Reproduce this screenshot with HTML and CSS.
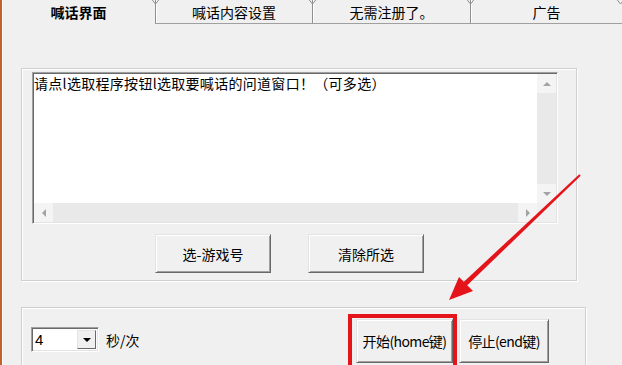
FILE: index.html
```html
<!DOCTYPE html>
<html lang="zh-CN">
<head>
    <meta charset="UTF-8">
    <title>喊话界面</title>
    <link rel="stylesheet" href="styles.css">
</head>
<body>
    <div class="window">
        <!-- 标签页 -->
        <div class="tabs">
            <div class="tab active">喊话界面</div>
            <div class="tab tab-2">
                <svg class="notch" width="9" height="6"><path d="M0.5 0 L4.5 5 L8.5 0" /></svg>
                喊话内容设置
            </div>
            <div class="tab tab-3">
                <svg class="notch" width="9" height="6"><path d="M0.5 0 L4.5 5 L8.5 0" /></svg>
                无需注册了。
            </div>
            <div class="tab tab-4">
                <svg class="notch" width="9" height="6"><path d="M0.5 0 L4.5 5 L8.5 0" /></svg>
                广告
                <svg class="notch notch-end" width="9" height="6"><path d="M0.5 0 L4.5 5 L8.5 0" /></svg>
            </div>
        </div>

        <div class="panel">
            <div class="group group-top">
                <div class="listbox">
                    <div class="list-body">请点l选取程序按钮l选取要喊话的问道窗口！（可多选）</div>
                    <div class="vscroll">
                        <span class="sb-btn"><i class="arrow up"></i></span>
                        <span class="sb-btn"><i class="arrow down"></i></span>
                    </div>
                    <div class="hscroll">
                        <span class="sb-btn"><i class="arrow left"></i></span>
                        <span class="sb-btn"><i class="arrow right"></i></span>
                    </div>
                    <div class="corner"></div>
                </div>
                <div class="btn-row">
                    <button class="btn btn-wide">选-游戏号</button>
                    <button class="btn btn-wide">清除所选</button>
                </div>
            </div>

            <div class="group group-bottom">
                <div class="interval">
                    <div class="combo">
                        <span class="combo-value">4</span>
                        <span class="combo-btn"><i class="arrow down dark"></i></span>
                    </div>
                    <span class="unit">秒/次</span>
                </div>
                <div class="actions">
                    <button class="btn btn-start">开始(home键)</button>
                    <button class="btn btn-stop">停止(end键)</button>
                </div>
            </div>
        </div>

        <!-- 标注 -->
        <div class="mark-box"></div>
        <svg class="mark-arrow" width="622" height="365" viewBox="0 0 622 365">
            <polygon points="580.7,175.7 579.3,174.3 462.3,283.2 465.7,286.8" />
            <polygon points="449,300 459,277 473,291" />
        </svg>
    </div>
</body>
</html>
```

FILE: styles.css
```css
* {
    box-sizing: border-box;
}
body {
    margin: 0;
    background: #f0f0f0;
    font-family: "Noto Sans CJK SC", "Liberation Sans", sans-serif;
    font-size: 14px;
    color: #000;
}
.window {
    position: relative;
    width: 622px;
    height: 365px;
    overflow: hidden;
    border-left: 2px solid #c3612d;
    box-shadow: inset 1px 0 #fff;
}

/* 标签页 */
.tabs {
    display: flex;
    height: 24px;
}
.tab {
    position: relative;
    height: 24px;
    padding-top: 2px;
    line-height: 20px;
    text-align: center;
    border-left: 1px solid #8f8f8f;
    border-bottom: 1px solid #a0a0a0;
    box-shadow: inset 1px 0 #fff;
}
.tab.active {
    width: 153px;
    border: none;
    box-shadow: none;
    font-weight: bold;
}
.tab-2 { width: 157px; }
.tab-3 { width: 158px; }
.tab-4 { width: 152px; }
.notch {
    position: absolute;
    left: -5px;
    top: -1px;
}
.notch path {
    fill: none;
    stroke: #8f8f8f;
    stroke-width: 1;
}
.notch-end {
    left: auto;
    right: -3px;
}

/* 主面板 */
.panel {
    padding: 44px 0 0 19px;
}
.group {
    border: 1px solid #cfcfcf;
    box-shadow: inset 1px 1px 0 #fff, 1px 1px 0 #fff;
}
.group-top {
    width: 556px;
    padding: 3px 0 7px 10px;
}
.group-bottom {
    width: 565px;
    height: 80px;
    margin-top: 26px;
    padding: 0 36px 0 9px;
    display: flex;
    align-items: flex-start;
}

/* 列表框 */
.listbox {
    width: 526px;
    height: 152px;
    padding: 1px;
    border: 1px solid;
    border-color: #a0a0a0 #fff #fff #a0a0a0;
    box-shadow: inset 1px 1px #696969, inset -1px -1px #e3e3e3;
    background: #fff;
    display: grid;
    grid-template-columns: 1fr 19px;
    grid-template-rows: 1fr 19px;
}
.list-body {
    min-width: 0;
    line-height: 18px;
    white-space: nowrap;
    letter-spacing: 0.3px;
}
.vscroll,
.hscroll {
    display: flex;
    justify-content: space-between;
    background: #e9e9e9;
}
.vscroll {
    flex-direction: column;
}
.corner {
    background: #f0f0f0;
}
.sb-btn {
    width: 19px;
    height: 19px;
    display: flex;
    align-items: center;
    justify-content: center;
    background: #f4f4f4;
}
.arrow {
    width: 0;
    height: 0;
    border: 4px solid transparent;
}
.arrow.up {
    border-bottom-color: #a3a3a3;
    border-top-width: 0;
}
.arrow.down {
    border-top-color: #a3a3a3;
    border-bottom-width: 0;
}
.arrow.left {
    border-right-color: #a3a3a3;
    border-left-width: 0;
}
.arrow.right {
    border-left-color: #a3a3a3;
    border-right-width: 0;
}
.arrow.dark {
    border-top-color: #000;
    border-width: 4px 4px 0;
}

/* 按钮 */
.btn-row {
    display: flex;
    gap: 37px;
    margin: 10px 0 0 123px;
}
.btn {
    font-family: inherit;
    font-size: 14px;
    color: #000;
    background: #f0f0f0;
    border: 1px solid;
    border-color: #e3e3e3 #696969 #696969 #e3e3e3;
    box-shadow: inset 1px 1px #fff, inset -1px -1px #a0a0a0;
    padding: 0;
}
.btn-wide {
    width: 116px;
    height: 39px;
}
.btn-start {
    width: 97px;
    height: 44px;
    letter-spacing: -0.6px;
}
.btn-stop {
    width: 90px;
    height: 44px;
    letter-spacing: -0.6px;
}

/* 间隔 */
.interval {
    display: flex;
    align-items: center;
    margin-top: 19px;
}
.combo {
    display: flex;
    width: 68px;
    height: 25px;
    padding: 2px;
    border: 1px solid;
    border-color: #a0a0a0 #fff #fff #a0a0a0;
    box-shadow: inset 1px 1px #696969, inset -1px -1px #e3e3e3;
    background: #fff;
}
.combo-value {
    flex: 1;
    padding-left: 1px;
    font-family: "Liberation Sans", sans-serif;
    font-size: 15px;
    line-height: 19px;
}
.combo-btn {
    width: 19px;
    display: flex;
    align-items: center;
    justify-content: center;
    background: #f0f0f0;
    border: 1px solid;
    border-color: #e3e3e3 #696969 #696969 #e3e3e3;
}
.unit {
    margin-left: 7px;
}
.actions {
    display: flex;
    gap: 6px;
    margin: 11px 0 0 auto;
}

/* 标注 */
.mark-box {
    position: absolute;
    left: 346px;
    top: 314px;
    width: 109px;
    height: 60px;
    border: 4px solid #e5141b;
}
.mark-arrow {
    position: absolute;
    left: -2px;
    top: 0;
    pointer-events: none;
}
.mark-arrow polygon {
    fill: #e5141b;
}
```
